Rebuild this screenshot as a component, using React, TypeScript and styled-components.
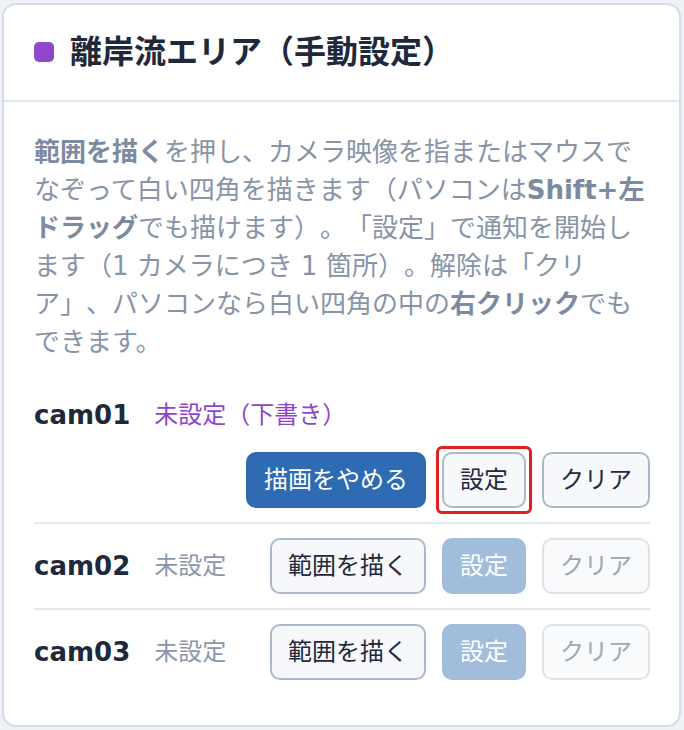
import React from "react"
import styled, { createGlobalStyle } from "styled-components"

const GlobalStyle = createGlobalStyle`
  html, body {
    margin: 0;
    padding: 0;
    background: #eef2f6;
  }
  body {
    font-family: "DejaVu Sans", "Noto Sans CJK JP", sans-serif;
    -webkit-font-smoothing: antialiased;
    text-spacing-trim: space-all;
  }
`

const Page = styled.div`
  padding: 3px 3px 3px 2px;
`

const Card = styled.section`
  background: #ffffff;
  border: 2px solid #d3dce7;
  border-radius: 14px;
  overflow: hidden;
`

const Header = styled.header`
  display: flex;
  align-items: center;
  gap: 16px;
  padding: 27px 29px 28px 30px;
  border-bottom: 2px solid #dfe5ec;
`

const Marker = styled.span`
  width: 20px;
  height: 20px;
  border-radius: 5px;
  background: linear-gradient(135deg, #9448d2, #8a44c8);
  flex-shrink: 0;
`

const Title = styled.h2`
  margin: 0;
  font-size: 32px;
  line-height: 40px;
  font-weight: 700;
  color: #1e293b;
`

const Body = styled.div`
  padding: 31px 29px 31px 30px;
`

const Help = styled.p`
  margin: 0;
  font-size: 26px;
  line-height: 38px;
  color: #8794a8;

  strong {
    font-weight: 700;
    color: #7c8ba0;
  }
`

const CamList = styled.div`
  margin-top: 22px;
`

const CamRow = styled.div`
  display: flex;
  flex-wrap: wrap;
  align-items: center;
  column-gap: 24px;
  row-gap: 19px;
  padding: 14px 0;
  border-bottom: 2px solid #e2e8f0;

  &:last-child {
    border-bottom: none;
  }
`

const CamName = styled.span`
  font-size: 26px;
  line-height: 36px;
  font-weight: 700;
  color: #1e293b;
`

const Status = styled.span<{ $draft?: boolean }>`
  font-size: 24px;
  line-height: 36px;
  color: ${(p) => (p.$draft ? "#8e44c8" : "#8a97aa")};
`

const Actions = styled.div`
  display: flex;
  gap: 16px;
  margin-left: auto;
`

type Variant = "primary" | "outline" | "muted" | "ghost"

const Button = styled.button<{ $variant: Variant; $focused?: boolean }>`
  position: relative;
  font-family: inherit;
  font-size: 24px;
  line-height: 28px;
  padding: 12px 16px;
  border-radius: 10px;
  border: 2px solid;
  cursor: pointer;

  ${(p) =>
    p.$variant === "primary" &&
    `
      background: #2f6bb3;
      border-color: #2f6bb3;
      color: #ffffff;
    `}
  ${(p) =>
    p.$variant === "outline" &&
    `
      background: #f6f8fb;
      border-color: #a9b8cc;
      color: #1e293b;
    `}
  ${(p) =>
    p.$variant === "muted" &&
    `
      background: #a2bcdc;
      border-color: #a2bcdc;
      color: #ffffff;
      cursor: default;
    `}
  ${(p) =>
    p.$variant === "ghost" &&
    `
      background: #f8fafc;
      border-color: #dde3ea;
      color: #9ea7b3;
      cursor: default;
    `}

  ${(p) =>
    p.$focused &&
    `
      &::after {
        content: "";
        position: absolute;
        inset: -8px;
        border: 3px solid #e0201f;
        border-radius: 6px;
        pointer-events: none;
      }
    `}
`

interface ICam {
  id: string
  drawing: boolean
}

const cams: ICam[] = [
  { id: "cam01", drawing: true },
  { id: "cam02", drawing: false },
  { id: "cam03", drawing: false },
]

const App: React.FC = () => {
  return (
    <Page>
      <GlobalStyle />
      <Card>
        <Header>
          <Marker />
          <Title>離岸流エリア（手動設定）</Title>
        </Header>
        <Body>
          <Help>
            <strong>範囲を描く</strong>を押し、カメラ映像を指またはマウスでなぞって白い四角を描きます（パソコンは
            <strong>Shift+左ドラッグ</strong>でも描けます）。「設定」で通知を開始します（1 カメラにつき 1
            箇所）。解除は「クリア」、パソコンなら白い四角の中の<strong>右クリック</strong>でもできます。
          </Help>
          <CamList>
            {cams.map((cam) => (
              <CamRow key={cam.id}>
                <CamName>{cam.id}</CamName>
                <Status $draft={cam.drawing}>{cam.drawing ? "未設定（下書き）" : "未設定"}</Status>
                <Actions>
                  {cam.drawing ? (
                    <>
                      <Button $variant="primary">描画をやめる</Button>
                      <Button $variant="outline" $focused>
                        設定
                      </Button>
                      <Button $variant="outline">クリア</Button>
                    </>
                  ) : (
                    <>
                      <Button $variant="outline">範囲を描く</Button>
                      <Button $variant="muted" disabled>
                        設定
                      </Button>
                      <Button $variant="ghost" disabled>
                        クリア
                      </Button>
                    </>
                  )}
                </Actions>
              </CamRow>
            ))}
          </CamList>
        </Body>
      </Card>
    </Page>
  )
}

export default App
